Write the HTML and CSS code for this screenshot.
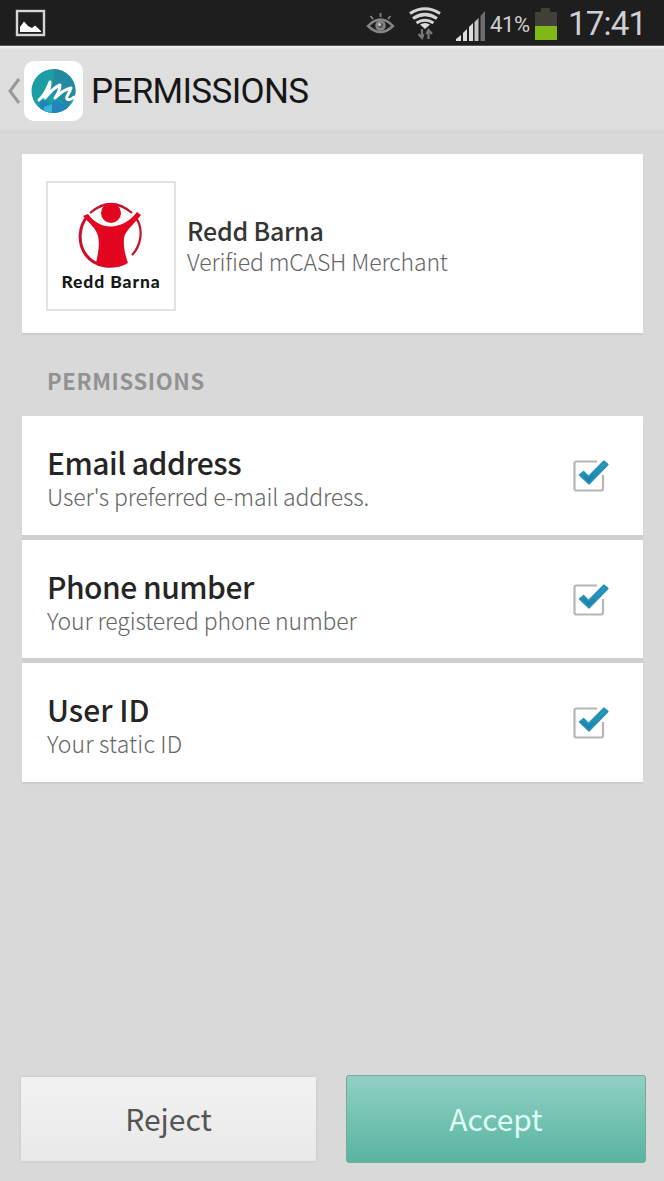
FILE: index.html
```html
<!DOCTYPE html>
<html lang="en">
<head>
<meta charset="utf-8">
<title>Permissions</title>
<link rel="stylesheet" href="styles.css">
</head>
<body>
<svg width="0" height="0" class="defs" aria-hidden="true">
  <defs>
    <linearGradient id="tick" x1="0" y1="0" x2="0" y2="1"><stop offset="0" stop-color="#2f9fc8"/><stop offset="1" stop-color="#147da3"/></linearGradient>
    <symbol id="checkbox" viewBox="0 0 40 36">
      <path d="M27 4.500H6.500Q4.500 4.500 4.500 6.500V31.500Q4.500 33.500 6.500 33.500H31Q33 33.500 33 31.500V18" fill="none" stroke="#b9b5b3" stroke-width="2.200"/>
      <path d="M10 18L13.500 15L18.500 20L34 4.500L37.500 7.500L19 26.500Z" fill="url(#tick)" stroke="#2490b8" stroke-width="2.200" stroke-linejoin="round"/>
    </symbol>
  </defs>
</svg>
<div class="screen">
  <div class="status">
    <svg class="picture" width="32" height="28" viewBox="0 0 32 28">
      <rect x="2" y="2" width="27" height="24" fill="none" stroke="#d5d5d5" stroke-width="2.400"/>
      <path d="M5 22V18L9 12.500L13 17L17 19L20 16.500L26 22V23H5Z" fill="#fff"/>
    </svg>
    <svg class="eye" width="32" height="28" viewBox="0 0 32 28" fill="none" stroke="#858585" stroke-width="2.500">
      <path d="M3 17Q15.500 4 28 17Q15.500 29 3 17Z"/><circle cx="15.500" cy="16.500" r="4" fill="#5a5a5a"/>
      <path d="M15.500 8V4M8 10L5.500 7M23 10L25.500 7" stroke-width="1.800"/>
      <circle cx="14.500" cy="15.500" r="1.500" fill="#ccc" stroke="none"/>
    </svg>
    <svg class="wifi" width="34" height="34" viewBox="0 0 34 34" fill="none" stroke="#d4d4d4" stroke-width="3.200">
      <path d="M2 7.500Q17-2 32 7.500M5 12.500Q17 4.500 29 12.500M8.500 17Q17 11.500 25.500 17"/><path d="M12 18.500Q17 15.500 22 18.500L17 23Z" fill="#ddd" stroke="none"/>
      <path d="M14 23V31M10.500 28L14 32L15.500 28M20.500 33V24M18.500 28L20.500 24L24 28" stroke="#777" stroke-width="2.200"/>
    </svg>
    <svg class="signal" width="32" height="32" viewBox="0 0 32 32">
      <path d="M1 31V29L6 25V31ZM8 31V23L12 19V31ZM14 31V17L18 13V31Z" fill="#ddd"/>
      <path d="M19.500 31V12L23.500 8V31Z" fill="#c4c4c4"/><path d="M25.500 31V6L30 1V31Z" fill="#6c6c6c"/>
    </svg>
    <span class="percent">41%</span>
    <svg class="battery" width="24" height="34" viewBox="0 0 24 34">
      <path d="M7 0H16V4H23V19H1V4H7Z" fill="#414039"/><path d="M1 18H23V32H1Z" fill="#80b817"/>
    </svg>
    <span class="clock">17:41</span>
  </div>
  <header class="bar">
    <svg class="back" width="14" height="30" viewBox="0 0 14 30" fill="none" stroke="#9b979b" stroke-width="3"><path d="M12 3L3 15L12 27"/></svg>
    <svg class="app" width="60" height="60" viewBox="0 0 60 60">
      <defs><clipPath id="disc"><circle cx="29.500" cy="30" r="22"/></clipPath></defs>
      <rect x="0" y="0" width="59" height="60" rx="10" fill="#fff"/>
      <g clip-path="url(#disc)"><path d="M0 0H60V60H0Z" fill="#1d9ca4"/><path d="M31 7L53 12V34L43 45L28 30Z" fill="#2389a1"/><path d="M16 38L27 43L31 39L44 45V53H16Z" fill="#2284bd"/><path d="M20 46L28 43V53H20Z" fill="#37b5d5"/></g>
      <path d="M15 39C20 35 23 29 26 21C26 27 24 32 21 37C26 31 31 26 36 24C36 29 33 34 31 37C37 31 42 28 47 27C46 32 41 36 43 38C45 39.500 48 38 50 36" fill="none" stroke="#fff" stroke-width="3" stroke-linecap="round" stroke-linejoin="round"/>
    </svg>
    <h1 class="heading">PERMISSIONS</h1>
  </header>
  <main class="content">
    <section class="merchant">
      <div class="logo">
        <svg width="66" height="68" viewBox="0 0 66 68">
          <path d="M10 15C1 24-1 42 8 54C17 66 34 68 47 62" fill="none" stroke="#c8102b" stroke-width="3"/>
          <path d="M12 12Q33-6 54 12M58 17C66 28 63 45 54 54" fill="none" stroke="#c8102b" stroke-width="2.200"/>
          <circle cx="33" cy="12" r="10" fill="#e30620"/>
          <path d="M5 15L10 13C22 30 44 30 59 11L63 14C56 23 47 30 46 37C45 47 48 56 50 62C40 68 28 67 18 62C20 53 22 43 20 35C18 27 11 22 5 15Z" fill="#e30620"/>
        </svg>
        <span class="logo-name">Redd Barna</span>
      </div>
      <div class="about"><h2 class="name">Redd Barna</h2><p class="verified">Verified mCASH Merchant</p></div>
    </section>
    <h3 class="section-title">PERMISSIONS</h3>
    <section class="list">
      <div class="row"><div><h4 class="title email">Email address</h4><p class="detail email-detail">User's preferred e-mail address.</p></div><svg class="check" width="40" height="36"><use href="#checkbox"/></svg></div>
      <div class="row"><div><h4 class="title phone">Phone number</h4><p class="detail phone-detail">Your registered phone number</p></div><svg class="check" width="40" height="36"><use href="#checkbox"/></svg></div>
      <div class="row"><div><h4 class="title user">User ID</h4><p class="detail user-detail">Your static ID</p></div><svg class="check" width="40" height="36"><use href="#checkbox"/></svg></div>
    </section>
  </main>
  <footer class="actions"><button class="button reject">Reject</button><button class="button accept">Accept</button></footer>
</div>
</body>
</html>
```
FILE: styles.css
```css
* { box-sizing: border-box; }
body { margin: 0; background: #d9d9d9; font-family: "Noto Sans CJK SC", sans-serif; }
h1, h2, h3, h4, p { margin: 0; white-space: nowrap; }
svg { display: block; flex: none; }
.defs { position: absolute; }
.screen { width: 664px; height: 1181px; display: flex; flex-direction: column; overflow: hidden; }
.status { height: 46px; flex: none; display: flex; align-items: flex-start; background: #1e1e1e; border-bottom: 1px solid #555; color: #d0d0d0; font-family: Roboto, sans-serif; }
.picture { margin: 9px 0 0 15px; }
.eye { margin: 9px 0 0 318px; }
.wifi { margin: 6px 0 0 11px; }
.signal { margin: 10px 0 0 13px; }
.percent { width: 44px; margin-left: 3px; font-size: 22px; line-height: 49px; letter-spacing: -.4px; }
.battery { margin-top: 8px; }
.clock { margin-left: 10px; font-size: 33px; line-height: 47px; letter-spacing: -.8px; }
.bar { height: 87px; flex: none; display: flex; align-items: flex-start; background: linear-gradient(#f3f3f3, #dfdfdf 4px, #dddddd 83px, #d3d3d3); }
.back { margin: 30px 0 0 7px; }
.app { margin: 15px 0 0 3px; }
.heading { margin-left: 7px; font: 400 35px/92px Roboto, sans-serif; letter-spacing: -.65px; color: #161616; }
.content { padding: 21px 21px 0 22px; }
.merchant { height: 179px; display: flex; align-items: flex-start; padding: 27px 24px; background: #fff; box-shadow: 0 2px 1px #ccc; }
.logo { width: 130px; height: 130px; display: flex; flex-direction: column; align-items: center; border: 2px solid #e2e2e2; padding-top: 18px; }
.logo-name { font: 900 17.5px/22px Lato, sans-serif; letter-spacing: .9px; margin-top: 2px; color: #181818; white-space: nowrap; }
.about { margin: 33px 0 0 11px; }
.name { font-size: 25px; line-height: 32px; font-weight: 500; color: #353535; letter-spacing: -.2px; }
.verified { font-size: 23px; line-height: 30px; font-weight: 300; color: #666; letter-spacing: -.15px; }
.section-title { margin: 31px 0 0 25px; height: 52px; font-size: 22px; line-height: 32px; font-weight: 700; letter-spacing: .65px; color: #929292; }
.list { display: flex; flex-direction: column; gap: 5px; background: #cfcfcf; box-shadow: 0 2px 1px #cecece; }
.row { height: 118.5px; display: flex; justify-content: space-between; align-items: flex-start; background: #fff; padding: 27px 33px 0 25px; }
.title { font-size: 30px; line-height: 38px; font-weight: 500; color: #252525; }
.email, .phone { letter-spacing: -.5px; }
.detail { font-size: 23px; line-height: 31px; font-weight: 300; color: #666; }
.email-detail, .phone-detail { letter-spacing: -.15px; }
.user-detail { letter-spacing: .15px; }
.check { margin-top: 14px; }
.actions { margin-top: auto; display: flex; align-items: center; gap: 30px; padding: 0 18px 18px 21px; }
.button { padding: 0 0 3px; border: 0; font: 400 30px/80px "Noto Sans CJK SC", sans-serif; }
.reject { width: 295px; height: 84px; color: #555; background: linear-gradient(#f2f2f2, #e9e9e9); box-shadow: 0 0 3px #c5c5c5; }
.accept { width: 300px; height: 88px; color: #dcfff6; border: 1.5px solid #70ac9e; border-radius: 3px; background: linear-gradient(#91d0c2, #58b4a1); }
```
